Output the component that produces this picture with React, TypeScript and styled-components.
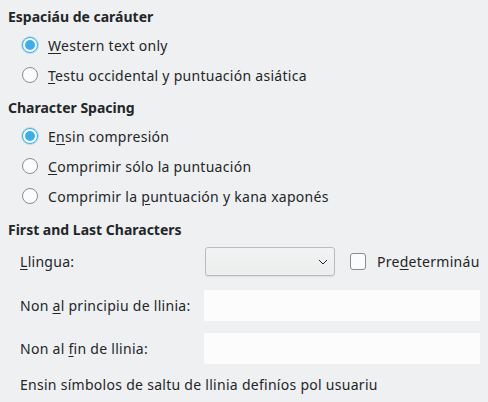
import styled, { createGlobalStyle } from "styled-components";

const GlobalStyle = createGlobalStyle`
  html, body {
    margin: 0;
    padding: 0;
    background: #eff0f1;
  }
  body {
    font-family: "Noto Sans", "DejaVu Sans", sans-serif;
    font-size: 14px;
    letter-spacing: 0.28px;
    color: #232629;
  }
`;

const Page = styled.div`
  width: 488px;
  height: 402px;
  box-sizing: border-box;
  padding: 7px 8px 0 8px;
  display: flex;
  flex-direction: column;
`;

const Heading = styled.div<{ $top?: number }>`
  height: 20px;
  line-height: 20px;
  font-weight: 700;
  letter-spacing: 0;
  margin-top: ${(p) => p.$top ?? 0}px;
`;

const RadioList = styled.div`
  display: flex;
  flex-direction: column;
  margin-top: 3px;
  padding-left: 14px;
`;

const RadioRow = styled.label`
  height: 30px;
  display: flex;
  align-items: center;
  gap: 10px;
`;

const RadioDot = styled.span<{ $checked?: boolean }>`
  width: 16px;
  height: 16px;
  box-sizing: border-box;
  border-radius: 50%;
  background: #fcfcfc;
  border: 1px solid ${(p) => (p.$checked ? "#3daee9" : "#8a8d90")};
  box-shadow: ${(p) => (p.$checked ? "0 0 0 1px rgba(61,174,233,0.3)" : "none")};
  display: flex;
  align-items: center;
  justify-content: center;
  flex: none;

  &::after {
    content: "";
    display: ${(p) => (p.$checked ? "block" : "none")};
    width: 10px;
    height: 10px;
    border-radius: 50%;
    background: #3daee9;
  }
`;

const Mn = styled.span`
  text-decoration: underline;
  text-underline-offset: 2px;
`;

const Form = styled.div`
  display: grid;
  grid-template-columns: 184px 1fr;
  padding-left: 12px;
  margin-top: 7px;
`;

const Label = styled.div<{ $h: number; $top?: number }>`
  height: ${(p) => p.$h}px;
  margin-top: ${(p) => p.$top ?? 0}px;
  display: flex;
  align-items: center;
`;

const Cell = styled.div<{ $h: number; $top?: number }>`
  height: ${(p) => p.$h}px;
  margin-top: ${(p) => p.$top ?? 0}px;
  display: flex;
  align-items: center;
  gap: 15px;
`;

const Combo = styled.div`
  width: 130px;
  height: 29px;
  box-sizing: border-box;
  border: 1px solid #babcbe;
  border-radius: 3px;
  background: linear-gradient(#f2f3f4, #eceded);
  box-shadow: 0 1px 1px rgba(0, 0, 0, 0.08);
  display: flex;
  align-items: center;
  justify-content: flex-end;
  padding-right: 6px;
  margin-left: 1px;
`;

const CheckBox = styled.span`
  width: 16px;
  height: 17px;
  box-sizing: border-box;
  border: 1px solid #8a8d90;
  border-radius: 3px;
  background: #fcfcfc;
  flex: none;
`;

const CheckLabel = styled.label`
  display: flex;
  align-items: center;
  gap: 11px;
`;

const TextField = styled.div`
  width: 276px;
  height: 31px;
  background: #fcfcfc;
`;

const Note = styled.div`
  grid-column: 1 / span 2;
  height: 20px;
  line-height: 20px;
  margin-top: 11px;
`;

const Chevron = () => (
  <svg width="10" height="6" viewBox="0 0 10 6">
    <path d="M1 1 L5 5 L9 1" fill="none" stroke="#232629" strokeWidth="1" />
  </svg>
);

export default function App() {
  return (
    <>
      <GlobalStyle />
      <Page>
        <Heading>Espaciáu de caráuter</Heading>
        <RadioList>
          <RadioRow>
            <RadioDot $checked />
            <span>
              <Mn>W</Mn>estern text only
            </span>
          </RadioRow>
          <RadioRow>
            <RadioDot />
            <span>
              <Mn>T</Mn>estu occidental y puntuación asiática
            </span>
          </RadioRow>
        </RadioList>

        <Heading $top={8}>Character Spacing</Heading>
        <RadioList>
          <RadioRow>
            <RadioDot $checked />
            <span>
              E<Mn>n</Mn>sin compresión
            </span>
          </RadioRow>
          <RadioRow>
            <RadioDot />
            <span>
              <Mn>C</Mn>omprimir sólo la puntuación
            </span>
          </RadioRow>
          <RadioRow>
            <RadioDot />
            <span>
              Comprimir la <Mn>p</Mn>untuación y kana xaponés
            </span>
          </RadioRow>
        </RadioList>

        <Heading $top={9}>First and Last Characters</Heading>
        <Form>
          <Label $h={29}>
            <span>
              <Mn>L</Mn>lingua:
            </span>
          </Label>
          <Cell $h={29}>
            <Combo>
              <Chevron />
            </Combo>
            <CheckLabel>
              <CheckBox />
              <span>
                Pre<Mn>d</Mn>etermináu
              </span>
            </CheckLabel>
          </Cell>

          <Label $h={31} $top={14}>
            <span>
              Non <Mn>a</Mn>l principiu de llinia:
            </span>
          </Label>
          <Cell $h={31} $top={14}>
            <TextField />
          </Cell>

          <Label $h={31} $top={12}>
            <span>
              Non al <Mn>f</Mn>in de llinia:
            </span>
          </Label>
          <Cell $h={31} $top={12}>
            <TextField />
          </Cell>

          <Note>Ensin símbolos de saltu de llinia definíos pol usuariu</Note>
        </Form>
      </Page>
    </>
  );
}
